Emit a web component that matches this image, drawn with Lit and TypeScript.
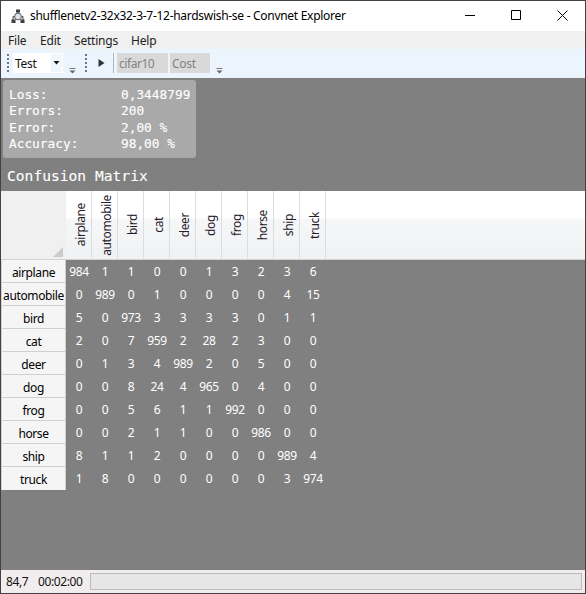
import { LitElement, html, css, svg } from "lit";
import { customElement } from "lit/decorators.js";

const LABELS = ["airplane", "automobile", "bird", "cat", "deer", "dog", "frog", "horse", "ship", "truck"];

const MATRIX = [
  [984, 1, 1, 0, 0, 1, 3, 2, 3, 6],
  [0, 989, 0, 1, 0, 0, 0, 0, 4, 15],
  [5, 0, 973, 3, 3, 3, 3, 0, 1, 1],
  [2, 0, 7, 959, 2, 28, 2, 3, 0, 0],
  [0, 1, 3, 4, 989, 2, 0, 5, 0, 0],
  [0, 0, 8, 24, 4, 965, 0, 4, 0, 0],
  [0, 0, 5, 6, 1, 1, 992, 0, 0, 0],
  [0, 0, 2, 1, 1, 0, 0, 986, 0, 0],
  [8, 1, 1, 2, 0, 0, 0, 0, 989, 4],
  [1, 8, 0, 0, 0, 0, 0, 0, 3, 974],
];

const STATS = [
  ["Loss:", "0,3448799"],
  ["Errors:", "200"],
  ["Error:", "2,00 %"],
  ["Accuracy:", "98,00 %"],
];

@customElement("title-bar")
class TitleBar extends LitElement {
  static styles = css`
    :host { display: flex; height: 30px; background: #fff; align-items: center; color: #000; }
    .logo { width: 14px; height: 15px; margin-left: 10px; flex: none; }
    .name { margin-left: 5px; flex: 1; letter-spacing: -0.29px; line-height: 18px; white-space: nowrap; }
    .button { width: 46px; height: 30px; flex: none; }
  `;
  render() {
    return html`
      <svg class="logo" viewBox="0 0 14 15">
        <path d="M7 3v2M3.500 7.500H2v4M10.500 7.500H12v4" stroke="#444" stroke-width="1" fill="none" />
        <circle cx="7" cy="7.500" r="3.300" fill="#e2e2e2" stroke="#666" stroke-width="1.100" />
        <path d="M5 0.500h4v3h-4zM0.500 10.500h4v3.500h-4zM9.500 10.500h4v3.500h-4z" fill="#3c3c3c" />
      </svg>
      <span class="name">shufflenetv2-32x32-3-7-12-hardswish-se - Convnet Explorer</span>
      ${["M18 14.500h10", "M18.500 9.500h9v9h-9z", "M18.500 9.500l10 10M28.500 9.500l-10 10"].map(
        (d) => html`<svg class="button" viewBox="0 0 46 30">${svg`<path d=${d} fill="none" stroke="#000" stroke-width="1" />`}</svg>`
      )}
    `;
  }
}

@customElement("tool-strip")
class ToolStrip extends LitElement {
  static styles = css`
    :host { display: flex; height: 29px; background: #ecf4fd; align-items: flex-start; }
    svg { display: block; flex: none; }
    .grip { width: 2px; height: 18px; margin-top: 5px; }
    .first { margin-left: 6px; }
    .combo { display: flex; width: 50px; height: 20px; margin: 4px 0 0 4px; background: #fff; }
    .value { width: 36px; padding-left: 2px; line-height: 22px; letter-spacing: -0.3px; color: #111; }
    .arrow { width: 11px; height: 18px; margin-top: 1px; background: #f0f6fd; }
    .more { width: 7px; height: 8px; margin: 18px 0 0 6px; }
    .second { margin-left: 9px; }
    .play { width: 7px; height: 10px; margin: 9px 0 0 11px; }
    .rule { width: 1px; height: 20px; margin: 4px 3px 0 8px; background: #b4b8be; }
    .chip { height: 20px; margin-top: 4px; line-height: 22px; background: #d9d9d9; color: #828282; box-sizing: border-box; padding-left: 2px; }
    .data { width: 51px; letter-spacing: -0.45px; }
    .cost { width: 40px; margin-left: 2px; letter-spacing: -0.3px; }
  `;
  private grip(extra: string) {
    return html`<svg class="grip ${extra}" viewBox="0 0 2 18">
      <path d="M1 0v18" stroke="#6f7680" stroke-width="2" stroke-dasharray="2 2" />
    </svg>`;
  }
  private more() {
    return html`<svg class="more" viewBox="0 0 7 8">
      <path d="M0.500 1.500h6" stroke="#777" /><path d="M0.500 3.500h6L3.500 6.500z" fill="#666" />
    </svg>`;
  }
  render() {
    return html`
      ${this.grip("first")}
      <div class="combo">
        <span class="value">Test</span>
        <svg class="arrow" viewBox="0 0 11 18"><path d="M2.500 7h6l-3 3.500z" fill="#111" /></svg>
      </div>
      ${this.more()} ${this.grip("second")}
      <svg class="play" viewBox="0 0 7 10"><path d="M0.500 1v8l6-4z" fill="#333" /></svg>
      <div class="rule"></div>
      <div class="chip data">cifar10</div>
      <div class="chip cost">Cost</div>
      ${this.more()}
    `;
  }
}

@customElement("confusion-matrix")
class ConfusionMatrix extends LitElement {
  static styles = css`
    :host { display: block; }
    .head { display: flex; height: 69px; box-sizing: border-box; border-bottom: 1px solid #d3d3d3;
      background: linear-gradient(#fff 0, #fff 40%, #f6f7f9 41%, #eff1f3 100%); }
    .corner { width: 65px; background: #f0f0f0; display: flex; align-items: flex-end; justify-content: flex-end; flex: none; }
    .corner svg { width: 10px; height: 10px; margin: 0 3px 2px 0; }
    .col { width: 26px; box-sizing: border-box; border-right: 1px solid #dcdddf; display: flex; align-items: center; justify-content: center; flex: none; color: #281b2c; }
    .col span { writing-mode: vertical-rl; transform: rotate(180deg); line-height: 18px; padding: 0 5px 0 0; letter-spacing: -0.38px; }
    .row { display: flex; height: 23px; }
    .label { width: 65px; box-sizing: border-box; background: #f5f5f5; border: solid #d0d0d0; border-width: 0 1px 1px 1px; text-align: center;
      line-height: 25px; letter-spacing: -0.38px; color: #000; white-space: nowrap; flex: none; }
    .row:last-child .label { border-bottom: 0; }
    .cell { width: 26px; text-align: center; line-height: 23px; color: #fff; letter-spacing: -0.4px; }
  `;
  render() {
    return html`
      <div class="head">
        <div class="corner"><svg viewBox="0 0 10 10"><path d="M10 0v10H0z" fill="#cbcbcb" /></svg></div>
        ${LABELS.map((l) => html`<div class="col"><span>${l}</span></div>`)}
      </div>
      ${MATRIX.map(
        (row, i) => html`<div class="row">
          <div class="label">${LABELS[i]}</div>
          ${row.map((n) => html`<div class="cell">${n}</div>`)}
        </div>`
      )}
    `;
  }
}

@customElement("app-root")
class AppRoot extends LitElement {
  static styles = css`
    :host { display: flex; flex-direction: column; box-sizing: border-box; width: 586px; height: 594px; border: 1px solid #424242;
      background: #808080; font: 12px "Noto Sans", "Open Sans", sans-serif; overflow: hidden; }
    .menu { display: flex; height: 18px; background: #f0f0f0; line-height: 19px; color: #222; padding-left: 7px; letter-spacing: -0.2px; }
    .menu span { white-space: nowrap; }
    .file { width: 32px; }
    .edit { width: 34px; }
    .settings { width: 57px; }
    .body { flex: 1; display: flex; flex-direction: column; color: #fff; font-family: "DejaVu Sans Mono", monospace; -webkit-text-stroke: 0.12px #fff; }
    .stats { width: 193px; height: 78px; box-sizing: border-box; margin: 2px 0 0 2px; padding: 6px 0 0 6px; border-radius: 3px; background: #a9a9a9; font-size: 12.8px; }
    .stat { display: flex; height: 16.4px; line-height: 17px; white-space: nowrap; }
    .key { width: 112px; }
    .heading { margin: 8px 0 0 6px; height: 25px; line-height: 19px; font-size: 14.62px; }
    confusion-matrix { font-family: "Noto Sans", "Open Sans", sans-serif; -webkit-text-stroke: 0; }
    .status { display: flex; height: 23px; background: #f1edee; color: #111; line-height: 24px; padding-left: 5px; letter-spacing: -0.4px; }
    .rate { width: 32px; }
    .time { width: 52px; }
    .track { flex: 1; box-sizing: border-box; height: 17px; margin: 3px 3px 0 0; border: 1px solid #bcbcbc; background: #e6e6e6; }
  `;
  render() {
    return html`
      <title-bar></title-bar>
      <div class="menu">
        <span class="file">File</span><span class="edit">Edit</span><span class="settings">Settings</span><span>Help</span>
      </div>
      <tool-strip></tool-strip>
      <div class="body">
        <div class="stats">
          ${STATS.map(([k, v]) => html`<div class="stat"><span class="key">${k}</span><span>${v}</span></div>`)}
        </div>
        <div class="heading">Confusion Matrix</div>
        <confusion-matrix></confusion-matrix>
      </div>
      <div class="status">
        <span class="rate">84,7</span><span class="time">00:02:00</span>
        <div class="track"></div>
      </div>
    `;
  }
}
